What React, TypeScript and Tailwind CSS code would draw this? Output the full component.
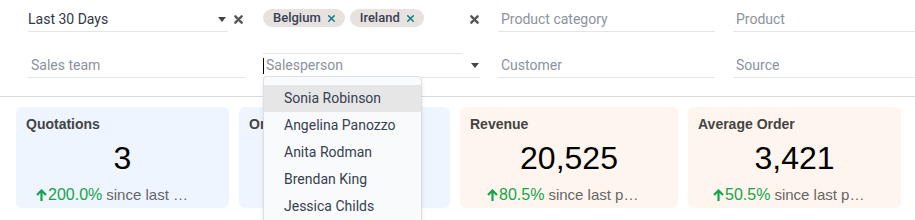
import { X } from "lucide-react";

type Card = {
  title: string;
  value?: string;
  delta?: string;
  rest?: string;
  bg: string;
  pad: string;
};

const CARDS: Card[] = [
  { title: "Quotations", value: "3", delta: "200.0%", rest: "since last …", bg: "bg-[#eef5ff]", pad: "pl-[10px]" },
  // mostly hidden behind the salesperson dropdown
  { title: "Orders", bg: "bg-[#eef5ff]", pad: "pl-[20px]" },
  { title: "Revenue", value: "20,525", delta: "80.5%", rest: "since last p…", bg: "bg-[#fef6ee]", pad: "pl-[17px]" },
  { title: "Average Order", value: "3,421", delta: "50.5%", rest: "since last p…", bg: "bg-[#fef6ee]", pad: "pl-[15px]" },
];

const PEOPLE = ["Sonia Robinson", "Angelina Panozzo", "Anita Rodman", "Brendan King", "Jessica Childs"];

function Caret() {
  return (
    <svg width="8" height="5" viewBox="0 0 8 5" className="shrink-0 text-[#444]">
      <path d="M0 0h8L4 5z" fill="currentColor" />
    </svg>
  );
}

function Times() {
  return (
    <svg width="9" height="9" viewBox="0 0 10 10" className="shrink-0 text-[#555]">
      <path d="M1.5 1.5l7 7M8.5 1.5l-7 7" stroke="currentColor" strokeWidth="2.6" strokeLinecap="round" />
    </svg>
  );
}

function Tag({ label }: { label: string }) {
  return (
    <span className="flex h-[18px] items-center gap-[5px] rounded-full bg-[#e7e1e0] pl-[10px] pr-[8px] text-[13px] font-medium text-[#374151]">
      {label}
      <X size={11} strokeWidth={3} className="text-[#017e84]" />
    </span>
  );
}

function Field({ placeholder, tall }: { placeholder: string; tall?: boolean }) {
  return (
    <div
      className={`flex ${tall ? "h-[26px] pt-[2px]" : "h-[24px]"} items-center border-b border-[#e2e5e9] pl-[3px] text-[14px] text-[#8b939d]`}
    >
      {placeholder}
    </div>
  );
}

export default function App() {
  return (
    <div className="h-[220px] w-[915px] overflow-hidden bg-white font-['Roboto',sans-serif]">
      <div className="grid grid-cols-[217px_217px_217px_217px] gap-x-[18px] pl-[28px] pt-[6px] pb-[18px]">
        {/* row 1 */}
        <div className="flex items-start gap-[6px]">
          <div className="flex h-[26px] w-[200px] items-center justify-between border-b border-[#e2e5e9] pt-[2px] pr-[2px] text-[14px] text-[#2f3742]">
            Last 30 Days
            <Caret />
          </div>
          <div className="mt-[9px]">
            <Times />
          </div>
        </div>
        <div className="flex items-start gap-[8px]">
          <div className="h-[48px] w-[199px] border-b border-[#e2e5e9] pt-[3px]">
            <div className="flex gap-[5px]">
              <Tag label="Belgium" />
              <Tag label="Ireland" />
            </div>
          </div>
          <div className="mt-[9px]">
            <Times />
          </div>
        </div>
        <Field placeholder="Product category" tall />
        <Field placeholder="Product" tall />

        {/* row 2 */}
        <Field placeholder="Sales team" />
        <div className="relative">
          <div className="flex h-[24px] items-center justify-between border-b border-[#e2e5e9] pr-[1px] text-[14px] text-[#8b939d]">
            <span className="flex items-center">
              <span className="mr-[2px] h-[16px] w-px bg-black" />
              Salesperson
            </span>
            <Caret />
          </div>
          <div className="absolute left-0 top-[22px] z-10 h-[150px] w-[159px] rounded-t-[4px] border border-[#dcdfe3] bg-[#f9fafb] pt-[8px] shadow-md">
            {PEOPLE.map((p, i) => (
              <div
                key={p}
                className={`flex h-[27px] items-center pl-[20px] text-[14px] text-[#374151] ${i === 0 ? "bg-[#e6e6e6]" : ""}`}
              >
                {p}
              </div>
            ))}
          </div>
        </div>
        <Field placeholder="Customer" />
        <Field placeholder="Source" />
      </div>

      <div className="border-t border-[#d8dadd] px-[16px] pt-[10px]">
        <div className="grid grid-cols-[213px_211px_218px_213px] gap-[10px] font-['Liberation_Sans',Arial,sans-serif]">
          {CARDS.map((c) => (
            <div key={c.title} className={`flex h-[101px] flex-col rounded-[6px] ${c.bg} px-[10px] pt-[7px]`}>
              <div className="text-[14px] font-bold leading-[20px] text-[#444]">{c.title}</div>
              {c.value && (
                <>
                  <div className="mt-[4px] text-center text-[32px] leading-[40px] text-black">{c.value}</div>
                  <div className={`mt-[5px] flex h-[24px] items-center whitespace-nowrap text-[15px] ${c.pad}`}>
                    <svg width="11" height="13" viewBox="0 0 11 13" className="mr-[1px] text-[#16a34a]">
                      <path d="M5.5 12V2M1 6l4.5-4.5L10 6" stroke="currentColor" strokeWidth="2.2" fill="none" />
                    </svg>
                    <span className="text-[16px] text-[#16a34a]">{c.delta}</span>
                    <span className="ml-[4px] text-[#666]">{c.rest}</span>
                  </div>
                </>
              )}
            </div>
          ))}
        </div>
      </div>
    </div>
  );
}
